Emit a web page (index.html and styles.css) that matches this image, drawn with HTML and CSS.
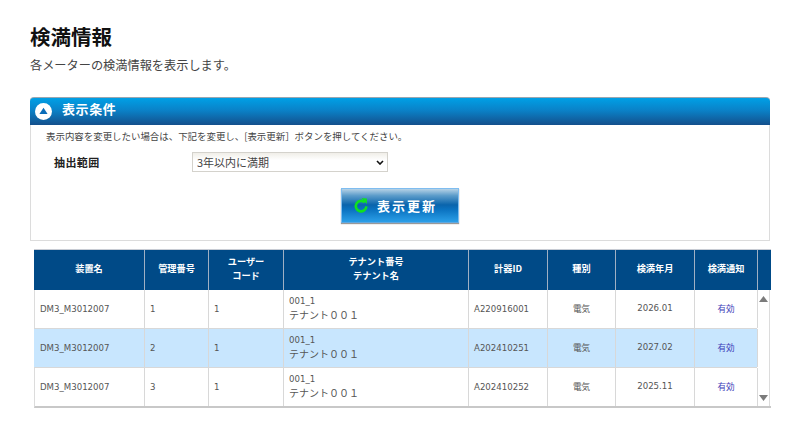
FILE: index.html
```html
<!DOCTYPE html>
<html lang="ja">
<head>
<meta charset="utf-8">
<title>検満情報</title>
<link rel="stylesheet" href="styles.css">
</head>
<body>
<main class="page">
  <h1 class="title">検満情報</h1>
  <p class="lead">各メーターの検満情報を表示します。</p>

  <section class="panel">
    <header class="panel-head">
      <svg class="panel-icon" width="17" height="17" viewBox="0 0 17 17"><circle cx="8.5" cy="8.5" r="8.5" fill="#fff"/><path d="M8.5 4.8 12.6 11H4.4Z" fill="#0a6cb8"/></svg>
      <span class="panel-title">表示条件</span>
    </header>
    <div class="panel-body">
      <p class="note">表示内容を変更したい場合は、下記を変更し、[表示更新］ボタンを押してください。</p>
      <div class="field">
        <label class="field-label" for="range">抽出範囲</label>
        <select class="field-select" id="range"><option>3年以内に満期</option></select>
      </div>
      <div class="actions">
        <button class="update" type="button">
          <svg width="16" height="17" viewBox="0 0 17 17"><path d="M12.6 5.2A5.6 5.6 0 1 0 14.2 9.4" fill="none" stroke="#10e020" stroke-width="2.8"/><path d="M9 0.6 14.8 1V7Z" fill="#10e020"/></svg>
          <span>表示更新</span>
        </button>
      </div>
    </div>
  </section>

  <section class="list">
    <div class="grid head">
      <div class="th">装置名</div>
      <div class="th">管理番号</div>
      <div class="th">ユーザー<br>コード</div>
      <div class="th">テナント番号<br>テナント名</div>
      <div class="th">計器ID</div>
      <div class="th">種別</div>
      <div class="th">検満年月</div>
      <div class="th">検満通知</div>
      <div class="th"></div>
    </div>
    <div class="body">
      <div class="rows">
        <div class="grid row">
          <div class="td">DM3_M3012007</div><div class="td">1</div><div class="td">1</div>
          <div class="td tenant"><span class="t-no">001_1</span><span class="t-name">テナント００１</span></div>
          <div class="td">A220916001</div><div class="td c">電気</div><div class="td c">2026.01</div><div class="td c link">有効</div>
        </div>
        <div class="grid row alt">
          <div class="td">DM3_M3012007</div><div class="td">2</div><div class="td">1</div>
          <div class="td tenant"><span class="t-no">001_1</span><span class="t-name">テナント００１</span></div>
          <div class="td">A202410251</div><div class="td c">電気</div><div class="td c">2027.02</div><div class="td c link">有効</div>
        </div>
        <div class="grid row">
          <div class="td">DM3_M3012007</div><div class="td">3</div><div class="td">1</div>
          <div class="td tenant"><span class="t-no">001_1</span><span class="t-name">テナント００１</span></div>
          <div class="td">A202410252</div><div class="td c">電気</div><div class="td c">2025.11</div><div class="td c link">有効</div>
        </div>
      </div>
      <div class="scroll">
        <svg width="9" height="6" viewBox="0 0 9 6"><path d="M4.5 0 9 6H0Z" fill="#7b7b7b"/></svg>
        <svg width="9" height="6" viewBox="0 0 9 6"><path d="M0 0H9L4.5 6Z" fill="#7b7b7b"/></svg>
      </div>
    </div>
  </section>
</main>
</body>
</html>
```
FILE: styles.css
```css
* { box-sizing: border-box; }
html, body { margin: 0; padding: 0; background: #fff; }
body {
  width: 800px;
  height: 432px;
  overflow: hidden;
  font-family: "DejaVu Sans", "Noto Sans CJK JP", sans-serif;
  color: #444;
}
.page { padding: 24px 30px 0; }
.title {
  margin: 0;
  font-size: 20.5px;
  line-height: 24px;
  font-weight: 700;
  color: #111;
  font-family: "Noto Sans CJK JP", sans-serif;
}
.lead {
  margin: 9px 0 0;
  font-size: 12.2px;
  line-height: 16px;
  color: #444;
  font-family: "Noto Sans CJK JP", sans-serif;
}
.panel { margin-top: 24px; width: 740px; }
.panel-head {
  height: 28px;
  display: flex;
  align-items: center;
  gap: 10px;
  padding: 0 0 1px 5px;
  border-top: 1px solid #9aa6b0;
  border-radius: 4px 4px 0 0;
  background: linear-gradient(#00a0e6, #0a82c8 45%, #14508c);
}
.panel-title {
  padding-bottom: 5px;
  color: #fff;
  font-size: 13px;
  font-weight: 700;
  letter-spacing: 0.6px;
  font-family: "Noto Sans CJK JP", sans-serif;
}
.panel-body {
  height: 116px;
  border: 1px solid #dcdcdc;
  border-top: 0;
  padding: 4px 0 0 15px;
}
.note {
  margin: 0;
  font-size: 9.45px;
  line-height: 14px;
  color: #444;
  font-family: "Noto Sans CJK JP", sans-serif;
}
.field { display: flex; align-items: center; margin-top: 9px; padding-left: 8px; }
.field-label {
  width: 138px;
  font-size: 11px;
  font-weight: 700;
  color: #222;
  letter-spacing: 0.4px;
  font-family: "Noto Sans CJK JP", sans-serif;
}
.field-select {
  appearance: none;
  width: 196px;
  height: 20px;
  font-size: 11px;
  color: #444;
  background-color: #fff;
  background-image: url("data:image/svg+xml,%3Csvg xmlns='http://www.w3.org/2000/svg' width='8' height='5'%3E%3Cpath d='M1 1l3 3 3-3' fill='none' stroke='%23111' stroke-width='1.6'/%3E%3C/svg%3E"), linear-gradient(#f0eee8, #fff 40%);
  background-repeat: no-repeat;
  background-position: right 3px center, 0 0;
  border: 1px solid #d4d2cc;
  font-family: "Noto Sans CJK JP", sans-serif;
  padding: 0 0 0 4px;
}
.actions { display: flex; justify-content: center; margin-top: 16px; padding-right: 15px; }
.update {
  width: 118px;
  height: 35px;
  padding: 0 0 0 11px;
  display: flex;
  align-items: center;
  gap: 8px;
  border: 1px solid #7fbdf0;
  border-bottom-color: #5fa8e0;
  box-shadow: 0 1px 1px #999;
  background: linear-gradient(#b6d2e6, #5c9cca 20%, #0a64ac 48%, #0b72c0 62%, #2b9fe8);
  color: #fff;
  font-size: 13px;
  font-weight: 700;
  letter-spacing: 2px;
  font-family: "Noto Sans CJK JP", sans-serif;
}
.list { margin: 8px 0 0 4px; width: 737px; }
.grid {
  display: grid;
  grid-template-columns: 111px 64px 75px 185px 79px 68px 79px 63px;
}
.head {
  grid-template-columns: 111px 64px 75px 185px 79px 68px 79px 63px 13px;
  height: 41px;
  border-top: 1px solid #c8ccd4;
  background: #004a87;
}
.th {
  display: flex;
  align-items: center;
  justify-content: center;
  padding-bottom: 5px;
  text-align: center;
  color: #fff;
  font-size: 9.2px;
  line-height: 14px;
  font-weight: 700;
  border-right: 1px solid #9fb0c4;
  font-family: "Noto Sans CJK JP", sans-serif;
}
.th:last-child { border-right: 0; }
.body { display: flex; border-bottom: 2px solid #c8c8c8; border-left: 1px solid #dcdcdc; }
.rows { flex: none; width: 723px; margin-left: -1px; }
.row { height: 39px; border-bottom: 1px solid #d8d8d8; }
.row:last-child { border-bottom: 0; height: 38px; }
.row.alt { background: #c8e6fe; }
.td {
  display: flex;
  align-items: center;
  padding: 0 0 1px 5px;
  font-size: 8.6px;
  color: #555;
  border-right: 1px solid #d8d8d8;
  font-family: "DejaVu Sans", "Noto Sans CJK JP", sans-serif;
}
.td:first-child { padding-left: 6px; }
.td.c { justify-content: center; padding: 0 0 2px; }
.td.link { color: #3b3bb8; }
.tenant { flex-direction: column; align-items: flex-start; justify-content: center; padding: 0 0 2px 5px; }
.t-no { line-height: 13px; }
.t-name { font-size: 10px; line-height: 14px; font-family: "Noto Sans CJK JP", sans-serif; }
.scroll {
  flex: none;
  width: 13px;
  display: flex;
  flex-direction: column;
  justify-content: space-between;
  align-items: center;
  padding: 6px 0 5px;
  border-right: 1px solid #dcdcdc;
}
```
